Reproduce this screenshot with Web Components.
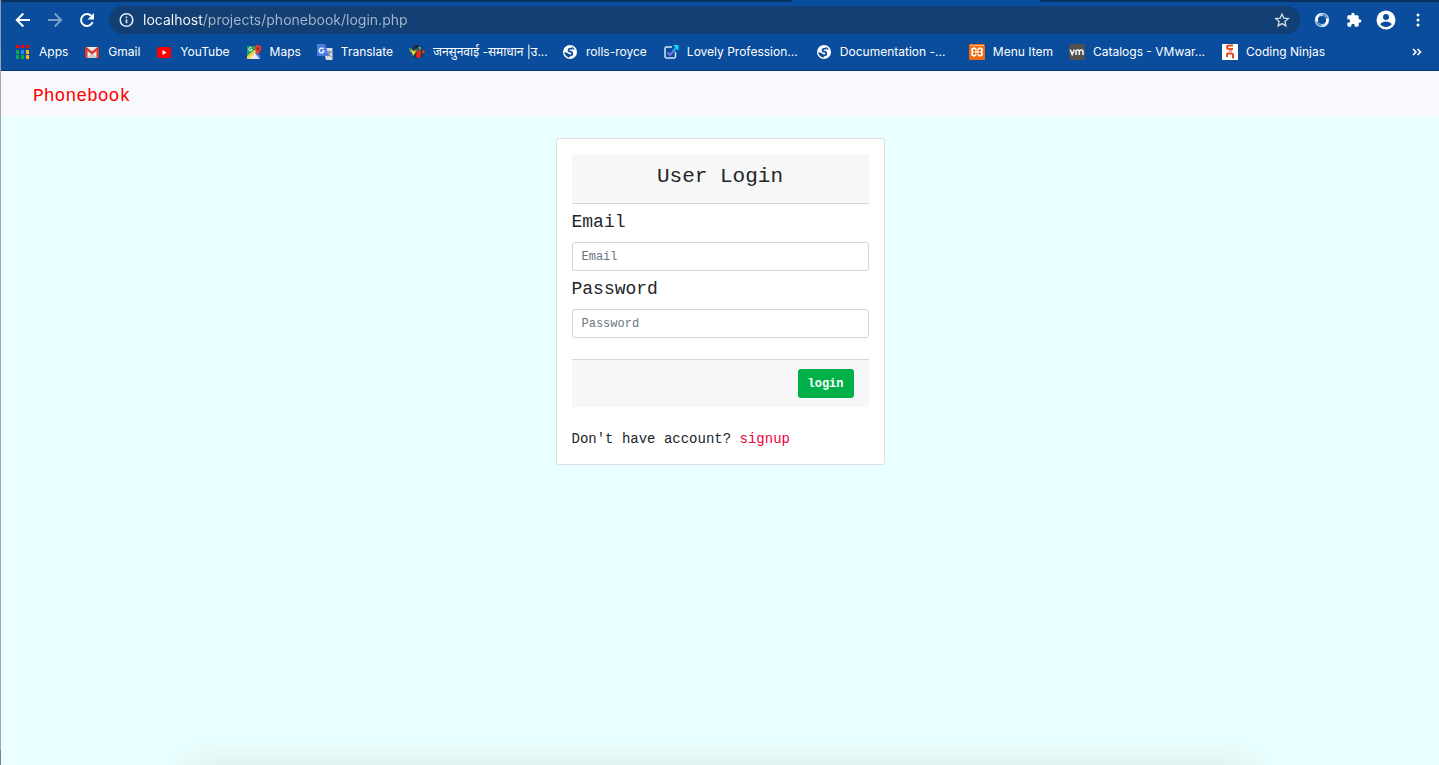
<!DOCTYPE html>
<html lang="en">
<head>
<meta charset="utf-8">
<meta name="viewport" content="width=device-width, initial-scale=1">
<title>Phonebook - Login</title>
<style>
  html, body { margin: 0; min-height: 100%; background: #eaffff; }
  body { font-family: "Liberation Mono", "Courier New", monospace; color: #212529; }
</style>
</head>
<body>
<browser-window>
  <tab-edge slot="chrome"></tab-edge>
  <browser-toolbar slot="chrome"></browser-toolbar>
  <bookmarks-bar slot="chrome">
    <book-mark icon="apps">Apps</book-mark>
    <book-mark icon="gmail">Gmail</book-mark>
    <book-mark icon="youtube">YouTube</book-mark>
    <book-mark icon="maps">Maps</book-mark>
    <book-mark icon="translate">Translate</book-mark>
    <book-mark icon="emblem" long>जनसुनवाई -समाधान |उ...</book-mark>
    <book-mark icon="globe">rolls-royce</book-mark>
    <book-mark icon="check" long>Lovely Profession...</book-mark>
    <book-mark icon="globe" long>Documentation -...</book-mark>
    <book-mark icon="xampp">Menu Item</book-mark>
    <book-mark icon="vm" long>Catalogs - VMwar...</book-mark>
    <book-mark icon="ninjas">Coding Ninjas</book-mark>
  </bookmarks-bar>
  <site-navbar>Phonebook</site-navbar>
  <login-card></login-card>
  <dock-shadow></dock-shadow>
</browser-window>

<script>
const define = (name, html, setup) => {
  const template = document.createElement('template');
  template.innerHTML = html;
  customElements.define(name, class extends HTMLElement {
    constructor() {
      super();
      this.attachShadow({ mode: 'open' }).append(template.content.cloneNode(true));
    }
    connectedCallback() { if (setup) setup(this, this.shadowRoot); }
  });
};

define('browser-window', `
<style>
  :host { display: block; min-height: 100vh; box-sizing: border-box; padding-left: 1px;
    background: linear-gradient(to bottom, #8d9aa8 50px, #a3a6a8 50px, #a3a6a8 calc(100% - 15px), #7c8082 0); }
  .frame { display: flex; flex-direction: column; min-height: 100vh; background: #eaffff; }
  header { background: #094d9c; border-bottom: 1px solid #07356f; font-family: Inter, Roboto, "Noto Sans", sans-serif; }
</style>
<div class="frame"><header><slot name="chrome"></slot></header><main><slot></slot></main></div>`);

define('tab-edge', `
<style>
  :host { display: flex; height: 2px; background: #094d9c; }
  i { flex: 791; background: #08315f; border-radius: 0 0 4px 0; }
  i + i { flex: 399; margin-left: 248px; border-radius: 0 0 0 4px; }
</style><i></i><i></i>`);

define('browser-toolbar', `
<style>
  :host { display: flex; align-items: center; height: 36px; padding: 0 5px 0 6px; color: #fff; }
  button { border: 0; padding: 0; margin: 0; background: none; color: inherit; width: 32px; height: 32px;
    display: grid; place-items: center; flex: none; }
  svg { display: block; width: 16px; height: 16px; }
  .omni { flex: 1; display: flex; align-items: center; height: 28px; margin: 0 6px; border-radius: 14px; background: #123f74; }
  .omni button { width: 36px; height: 28px; color: #d3dce6; }
  .omni .site { width: 34px; color: #e6ecf2; }
  input { flex: 1; min-width: 0; height: 28px; border: 0; padding: 0; outline: 0; font: 14px/28px Inter, Roboto, sans-serif;
    color: transparent; background: linear-gradient(90deg, #fff 60px, #a6b8cb 60px); background-clip: text; -webkit-background-clip: text; }
  .dim { opacity: .45; }
  .big { width: 20px; height: 20px; }
</style>
<button aria-label="Back"><svg viewBox="0 0 16 16" fill="none" stroke="currentColor" stroke-width="2"><path d="M15 8H2M8.3 1.5 1.8 8l6.5 6.500"/></svg></button>
<button class="dim" aria-label="Forward"><svg viewBox="0 0 16 16" fill="none" stroke="currentColor" stroke-width="2"><path d="M1 8h13M7.700 1.500 14.200 8l-6.500 6.500"/></svg></button>
<button aria-label="Reload"><svg viewBox="0 0 16 16" fill="none"><path d="M13.600 10.200A6 6 0 1 1 12.400 3.900" stroke="#fff" stroke-width="2"/><path d="M15 1v6.500H8.500z" fill="#fff"/></svg></button>
<div class="omni">
  <button class="site" aria-label="Site information"><svg viewBox="0 0 16 16" fill="none" stroke="currentColor" stroke-width="1.600"><circle cx="8.500" cy="8" r="6.300"/><path d="M8.500 7.300v4M8.500 4.400v1.700"/></svg></button>
  <input aria-label="Address" value="localhost/projects/phonebook/login.php">
  <button aria-label="Bookmark this page"><svg viewBox="0 0 16 16" fill="none" stroke="currentColor" stroke-width="1.300"><path d="m8 2 1.800 4.100 4.500.4-3.400 3 1 4.400L8 11.600l-3.900 2.300 1-4.400-3.400-3 4.500-.4z"/></svg></button>
</div>
<button aria-label="Extension"><svg viewBox="0 0 16 16" fill="none"><circle cx="8" cy="8" r="5.700" stroke="#a9c8e6" stroke-width="3.200"/><path d="M1.500 9C1 4 5 .8 9 1.300 5.500 2 3.200 5 4 9.500" fill="#fff"/><path d="M14.500 7c.5 5-3.500 8.200-7.500 7.700 3.500-.7 5.800-3.700 5-8.200" fill="#fff"/><path d="M9 2.800A5.600 5.600 0 0 1 13 6" stroke="#4b86c2" stroke-width="1.500"/><path d="M3 10a5.600 5.600 0 0 0 4 3.200" stroke="#4b86c2" stroke-width="1.500"/></svg></button>
<button aria-label="Extensions"><svg viewBox="0 0 24 24" fill="currentColor"><path d="M20.500 11H19V7c0-1.100-.9-2-2-2h-4V3.500a2.500 2.500 0 0 0-5 0V5H4c-1.100 0-2 .9-2 2v3.800h1.500a2.700 2.700 0 0 1 0 5.400H2V20c0 1.100.9 2 2 2h3.800v-1.500a2.700 2.700 0 0 1 5.400 0V22H17c1.100 0 2-.9 2-2v-4h1.500a2.500 2.500 0 0 0 0-5z"/></svg></button>
<button aria-label="Profile"><svg class="big" viewBox="0 0 20 20"><circle cx="10" cy="10" r="9.500" fill="#fff"/><circle cx="10" cy="7" r="3" fill="#094d9c"/><path d="M4.200 14.300C5.300 12.400 8 11.600 10 11.600s4.700.8 5.800 2.700A7 7 0 0 1 10 17.200a7 7 0 0 1-5.800-2.900z" fill="#094d9c"/></svg></button>
<button aria-label="Menu"><svg viewBox="0 0 16 16" fill="currentColor"><circle cx="8" cy="3" r="1.500"/><circle cx="8" cy="8" r="1.500"/><circle cx="8" cy="13" r="1.500"/></svg></button>`);

define('bookmarks-bar', `
<style>
  :host { display: flex; align-items: center; height: 28px; padding: 0 16px 4px 14px; color: #fff; }
  nav { display: flex; gap: 16px; flex: 1; min-width: 0; overflow: hidden; }
  button { border: 0; padding: 0; background: none; color: inherit; width: 12px; height: 20px; display: grid; place-items: center; }
</style>
<nav aria-label="Bookmarks"><slot></slot></nav>
<button aria-label="More bookmarks"><svg width="10" height="8" viewBox="0 0 10 8" fill="none" stroke="#fff" stroke-width="1.600"><path d="m1 1 3 3-3 3M5.500 1l3 3-3 3"/></svg></button>`);

const icons = {
  apps: '<path fill="#f00" d="M1 1h3v3H1zM6 1h3v3H6zM11 1h3v3h-3z"/><path fill="#0ba84f" d="M1 6h3v4H1zM1 11h3v4H1zM6 11h3v4H6z"/><path fill="#1c8cff" d="M6 6h3v4H6z"/><path fill="#fdb813" d="M11 6h3v4h-3zM11 11h3v4h-3z"/>',
  gmail: '<path fill="#e8e8e8" d="M1 3h14v11H1z"/><path fill="#c9c9c9" d="m3 14 5-5 5 5z"/><path fill="#d93a30" d="M1 3h1.500L8 7.500 13.500 3H15v11h-2.500V7L8 10.500 3.500 7v7H1z"/>',
  youtube: '<rect x="1" y="3" width="14" height="11" rx="2.500" fill="#f00"/><path fill="#fff" d="M6.500 6v5L10.500 8.500z"/>',
  maps: '<path fill="#1ba462" d="M1 2h10v6l-9 6H1z"/><path fill="#f2d24b" d="M1 12 11 4l1 3-8 8H1z"/><path fill="#e8eaed" d="m3 15 6-6 5 6z"/><path fill="#4285f4" d="m9 9 2-2 3 5v3z"/><path d="M5.500 4A1.600 1.600 0 1 0 6 5.500H4.800" fill="none" stroke="#fff"/><path fill="#e33b2e" d="M12 1a3.600 3.600 0 0 0-3.500 3.600C8.500 7 11 8 12 12c1-4 3.500-5 3.500-7.400A3.600 3.600 0 0 0 12 1z"/><circle cx="12" cy="4.500" r="1.200" fill="#86251e"/>',
  translate: '<path fill="#dadcdf" d="M6 4h9.500v12H9z"/><path fill="#4a7de4" d="M0 0h8l4 12H1a1 1 0 0 1-1-1z"/><path d="M10.500 8h4.500M12.700 7v1c0 2-1 3.500-2 4.500M11.500 9.500c.7 1.500 1.500 2.500 3 3.200" stroke="#747980" fill="none"/><path d="M6.500 5A2.400 2.400 0 1 0 7 7H5" fill="none" stroke="#fff" stroke-width="1.200"/>',
  emblem: '<circle cx="9" cy="8" r="6.500" fill="#263350"/><path fill="#66a837" d="m0 4 3 1 2 4-4-1z"/><path fill="#ead52f" d="m2 6 3 1 2-2v3l-3 4z"/><path fill="#292238" d="M5 2 9 1l4 2-2 3-5-1z"/><path fill="#eb2620" d="M8 8l2-3 2 2v4l-1 3H8l-1-3z"/><path fill="#3ba3cf" d="m10 2 3 2-2 2-2-2z"/><path fill="#3b8a45" d="m6 6 2-2 1 2-2 3z"/><path fill="#d45c33" d="m13 5 3 3-2 2z"/>',
  globe: '<circle cx="8" cy="8" r="7" fill="#fff"/><path d="M10.300 4.700H8.500C6.200 4.700 5.700 7.400 8 7.600c3 .2 3 3.600.2 3.700H7" fill="none" stroke="#094d9c" stroke-width="1.800"/><path d="M2.300 8 6 9.200 7.800 11v2.600C4.800 13.300 2.400 11 2.300 8z" fill="#094d9c"/><path d="M10 2.600 13 5.500 10.500 5.600z" fill="#094d9c"/>',
  check: '<path d="M9 3H3.500A1.500 1.500 0 0 0 2 4.500v8A1.500 1.500 0 0 0 3.500 14H11a1.500 1.500 0 0 0 1.500-1.500V8" fill="none" stroke="#dce5f5" stroke-width="1.500"/><path d="m4.500 8.500 2.500 2.500 4-4.500" fill="none" stroke="#7772ee" stroke-width="2"/><path d="m10 7.500 4-4.500" stroke="#27b8ee" stroke-width="2"/><path d="M10 1h5.500v6z" fill="#13d6f5"/>',
  xampp: '<rect width="16" height="16" rx="1.500" fill="#f56a0a"/><path d="M1 1.500h14" stroke="#ffb27a"/><path d="M7 6.500C7 4.500 5.500 4 4.200 4.300 2.500 4.700 2.500 7 4 8 2.500 9 2.500 11.300 4.200 11.700 5.500 12 6.800 11.500 7 10M9 6.500C9 4.500 10.500 4 11.800 4.300c1.700.4 1.700 2.700.2 3.700 1.500 1 1.500 3.300-.2 3.700C10.500 12 9.200 11.500 9 10M6 8.200h4" fill="none" stroke="#fff" stroke-width="1.700"/>',
  vm: '<rect width="16" height="16" rx="2" fill="#50504f"/><path d="m1.200 5.500 2 5 2.200-5M7 11V7.200c0-1.600 3.300-1.600 3.300 0V11M10.300 7.200c0-1.600 3.700-1.600 3.700 0V11" fill="none" stroke="#f3f3f3" stroke-width="1.600"/>',
  ninjas: '<path fill="#fff" d="M0 0h16v16H0z"/><path d="M11 1.500H7C5.500 1.500 5 2.200 5 3.300S5.500 5 7 5h4M5 9.500h4c1.500 0 2 .7 2 1.800v3.200M5 9.500V13" fill="none" stroke="#e8491d" stroke-width="2"/><path d="M7 7h3" stroke="#e8491d"/>'
};

define('book-mark', `
<style>
  :host { display: block; flex: none; }
  a { display: flex; align-items: center; gap: 8px; color: #fff; text-decoration: none; font-size: 12px; line-height: 20px; white-space: nowrap; }
  svg { flex: none; width: 16px; height: 16px; }
  :host([long]) a { width: 137px; }
</style>
<a href="#"><svg viewBox="0 0 16 16" aria-hidden="true"></svg><span><slot></slot></span></a>`,
(host, root) => { root.querySelector('svg').innerHTML = icons[host.getAttribute('icon')]; });

define('site-navbar', `
<style>
  :host { display: block; background: #f8f9fc; padding: 10px 32px 6px; }
  a { display: inline-block; color: #f00; font-size: 18px; line-height: 30px; text-decoration: none; vertical-align: top; }
</style>
<a href="#"><slot></slot></a>`);

define('login-card', `
<style>
  :host { display: block; box-sizing: border-box; width: 329px; max-width: 100%; margin: 21px auto; padding: 15px;
    background: #fff; border: 1px solid #dcdfdf; border-radius: 3px; }
  h1 { margin: 0; padding: 10px 15px 14px; background: #f7f7f7; border-bottom: 1px solid #d8d8d8; font-size: 21px; line-height: 25px;
    font-weight: 500; text-align: center; border-radius: 2px 2px 0 0; }
  form { margin: 0; }
  label { display: block; font-size: 18px; line-height: 22px; padding: 7px 0 9px; }
  input { display: block; box-sizing: border-box; width: 100%; height: 29px; padding: 4px 9px; border: 1px solid #ced4da; border-radius: 3px;
    font: 12px/18px "Liberation Mono", "Courier New", monospace; color: #495057; background: #fff; }
  input::placeholder { color: #6c757d; opacity: 1; }
  footer { display: flex; justify-content: flex-end; margin-top: 21px; padding: 9px 15px; background: #f7f7f7; border-top: 1px solid #d8d8d8; }
  button { width: 56px; height: 29px; padding: 0; border: 0; border-radius: 3px; background: #00b049; color: #fff;
    font: bold 12px/18px "Liberation Mono", "Courier New", monospace; }
  p { margin: 22px 0 0; font-size: 14px; line-height: 20px; }
  p a { color: #f0003c; text-decoration: none; }
</style>
<h1>User Login</h1>
<form>
  <label for="email">Email</label>
  <input id="email" type="email" placeholder="Email">
  <label for="password">Password</label>
  <input id="password" type="password" placeholder="Password">
  <footer><button type="button">login</button></footer>
</form>
<p>Don't have account? <a href="#">signup</a></p>`);

define('dock-shadow', `
<style>
  :host { position: fixed; left: 0; right: 0; bottom: 0; height: 60px; overflow: hidden; pointer-events: none; }
  div { height: 60px; margin: 60px 13% 0; border-radius: 12px; box-shadow: 0 0 36px rgba(90, 40, 30, .11); }
</style><div></div>`);
</script>
</body>
</html>
